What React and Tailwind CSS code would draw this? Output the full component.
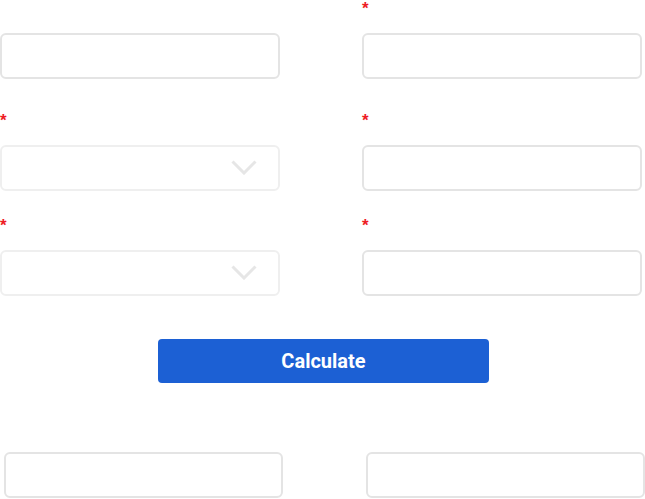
function Star() {
  return (
    <span
      className="block h-[33px] text-[17px] font-bold leading-none text-[#ee1c25]"
      style={{ fontFamily: '"Liberation Sans", sans-serif' }}
    >
      *
    </span>
  );
}

function TextField({ required }) {
  return (
    <div>
      {required ? <Star /> : <div className="h-[33px]" />}
      <input className="block h-[46px] w-[280px] rounded-[6px] border-2 border-[#e4e4e4] bg-white outline-none" />
    </div>
  );
}

function SelectField() {
  return (
    <div>
      <Star />
      <div className="relative h-[46px] w-[280px] rounded-[6px] border-2 border-[#efefef] bg-white">
        <svg className="absolute right-[21px] top-[13px]" width="26" height="15" viewBox="0 0 26 15" fill="none">
          <polyline points="1.5,1.5 13,13 24.5,1.5" stroke="#e6e6e6" strokeWidth="3" />
        </svg>
      </div>
    </div>
  );
}

export default function App() {
  return (
    <div className="w-[645px] bg-white" style={{ fontFamily: 'Roboto, sans-serif' }}>
      <div className="grid grid-cols-[280px_280px] gap-x-[82px]">
        <TextField />
        <TextField required />
      </div>
      <div className="mt-[33px] grid grid-cols-[280px_280px] gap-x-[82px]">
        <SelectField />
        <TextField required />
      </div>
      <div className="mt-[26px] grid grid-cols-[280px_280px] gap-x-[82px]">
        <SelectField />
        <TextField required />
      </div>
      <button className="mx-auto mt-[43px] flex h-[44px] w-[331px] translate-x-[1px] items-center justify-center rounded-[4px] bg-[#1c60d4] text-[20px] font-bold text-white">
        Calculate
      </button>
      <div className="mt-[69px] grid grid-cols-[279px_279px] gap-x-[83px] pl-[4px]">
        <input className="block h-[46px] rounded-[6px] border-2 border-[#e4e4e4] bg-white outline-none" />
        <input className="block h-[46px] rounded-[6px] border-2 border-[#e4e4e4] bg-white outline-none" />
      </div>
    </div>
  );
}
